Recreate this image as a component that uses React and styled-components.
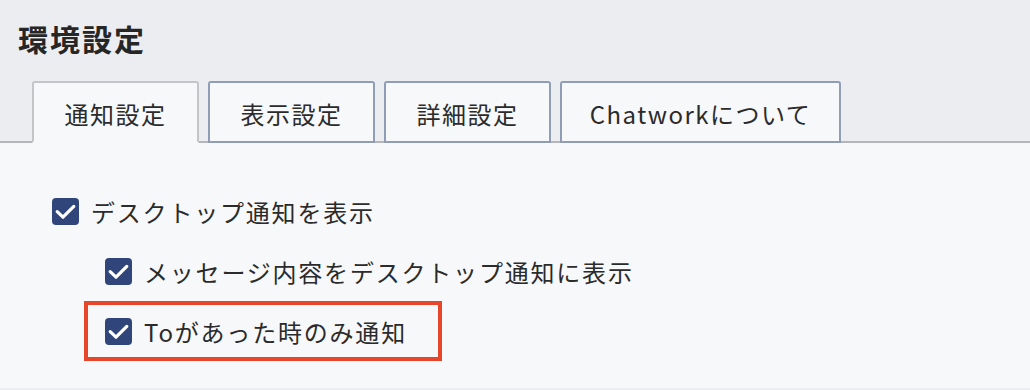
import React from "react";
import styled, { createGlobalStyle } from "styled-components";

const GlobalStyle = createGlobalStyle`
  html, body {
    margin: 0;
    padding: 0;
    background: #ecedf1;
  }
  body {
    font-family: "Noto Sans CJK JP", "Noto Sans", sans-serif;
    color: #2b2b2b;
  }
`;

const tabs = ["通知設定", "表示設定", "詳細設定", "Chatworkについて"];

const Check = () => (
  <CheckBox>
    <svg width="27" height="27" viewBox="0 0 27 27">
      <path
        d="M5.2 13.6 L11 19.2 L21.8 8.4"
        fill="none"
        stroke="#fff"
        strokeWidth="3.2"
        strokeLinecap="round"
        strokeLinejoin="round"
      />
    </svg>
  </CheckBox>
);

const App = () => {
  return (
    <>
      <GlobalStyle />
      <Page>
        <Header>
          <Title>環境設定</Title>
          <TabBar>
            {tabs.map((t, i) => (
              <Tab key={t} active={i === 0} wide={i === 3}>
                {t}
              </Tab>
            ))}
          </TabBar>
        </Header>

        <Panel>
          <Row>
            <Check />
            <Label>デスクトップ通知を表示</Label>
          </Row>
          <SubList>
            <SubRow>
              <Check />
              <Label>メッセージ内容をデスクトップ通知に表示</Label>
            </SubRow>
            <Highlight>
              <Check />
              <Label>Toがあった時のみ通知</Label>
            </Highlight>
          </SubList>
        </Panel>
      </Page>
    </>
  );
};

// Styled Components
const Page = styled.div`
  width: 1030px;
  height: 390px;
  display: flex;
  flex-direction: column;
  background: #ecedf1;
`;

const Header = styled.div`
  display: flex;
  flex-direction: column;
  padding: 18px 0 0 18px;
`;

const Title = styled.h1`
  margin: 0;
  font-size: 30px;
  line-height: 40px;
  font-weight: 700;
  letter-spacing: 2px;
  color: #262626;
`;

const TabBar = styled.div`
  display: flex;
  align-items: flex-end;
  gap: 9px;
  margin: 23px 0 0 -18px;
  padding-left: 32px;
  border-bottom: 2px solid #b5b6b9;
`;

const Tab = styled.div`
  box-sizing: border-box;
  width: ${(p) => (p.wide ? "281px" : "167px")};
  height: 62px;
  margin-bottom: -2px;
  display: flex;
  align-items: center;
  justify-content: center;
  font-size: 24px;
  letter-spacing: 1.5px;
  color: #2b2b2b;
  background: #f7f8fa;
  border: 2px solid ${(p) => (p.active ? "#c4c5c8" : "#8f9db5")};
  border-bottom-color: ${(p) => (p.active ? "#f7f8fa" : "#8f9db5")};
  border-radius: 3px 3px 0 0;
  padding-top: 2px;
`;

const Panel = styled.div`
  flex: 1;
  background: #f7f8fa;
  border-bottom: 2px solid #ecedf1;
  padding: 38px 0 0 52px;
  display: flex;
  flex-direction: column;
`;

const Row = styled.div`
  display: flex;
  align-items: center;
  gap: 12px;
  height: 60px;
`;

const SubList = styled.div`
  display: flex;
  flex-direction: column;
  margin-left: 32px;
`;

const SubRow = styled(Row)`
  padding-left: 21px;
`;

const Highlight = styled(Row)`
  box-sizing: border-box;
  width: 358px;
  padding-left: 17px;
  border: 4px solid #e8462b;
`;

const CheckBox = styled.span`
  width: 27px;
  height: 27px;
  flex-shrink: 0;
  border-radius: 4px;
  background: #30467a;
  display: flex;
  align-items: center;
  justify-content: center;
`;

const Label = styled.span`
  font-size: 24px;
  letter-spacing: 1.8px;
  color: #2b2b2b;
  white-space: nowrap;
`;

export default App;
